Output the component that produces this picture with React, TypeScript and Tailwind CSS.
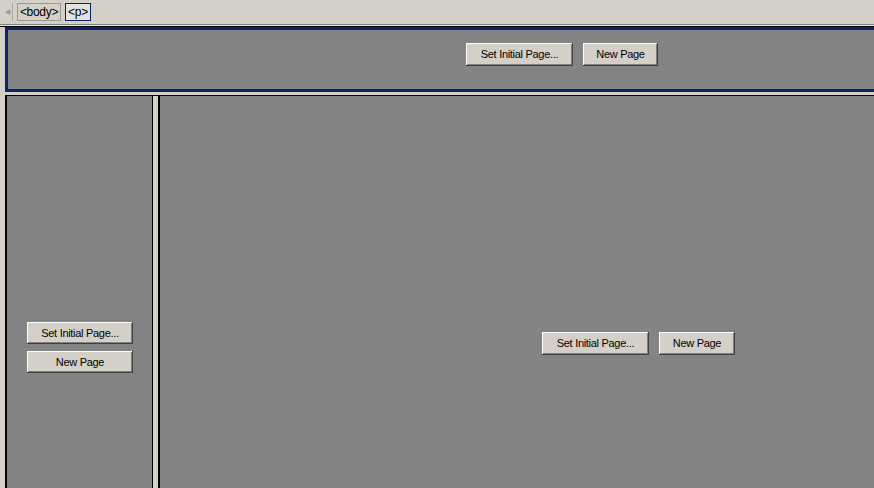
import React from 'react';

const font = { fontFamily: '"Liberation Sans", Arial, sans-serif' };

function WinButton({ label, w, h = 'h-[23px]' }: { label: string; w: string; h?: string }) {
  return (
    <button
      className={`${w} ${h} flex items-center justify-center bg-[#d4d0c8] text-[11px] leading-none tracking-[-0.3px] text-black shadow-[inset_-1px_-1px_0_#404040,inset_1px_1px_0_#ffffff,inset_-2px_-2px_0_#808080]`}
    >
      {label}
    </button>
  );
}

export default function App() {
  return (
    <div style={font} className="flex h-[488px] w-[874px] flex-col overflow-hidden bg-[#d4d0c8]">
      {/* tag selector bar */}
      <div className="flex h-[24px] items-center gap-[4px] pl-[2px] text-[12px] tracking-[-0.3px] text-black">
        <div className="flex h-[18px] w-[11px] items-center justify-center border-r border-[#a8a6a0] text-[7px] text-[#9a9890]">
          ◀
        </div>
        <div className="flex h-[18px] w-[44px] items-center justify-center border border-[#9a9890]">&lt;body&gt;</div>
        <div className="flex h-[18px] w-[26px] items-center justify-center border border-[#0a246a] bg-[#e4e2dc]">&lt;p&gt;</div>
      </div>
      <div className="h-px bg-[#808080]" />
      <div className="h-px bg-[#e8e6e0]" />
      <div className="h-px bg-[#000000]" />

      {/* top frame */}
      <div className="pl-[5px]">
        <div className="h-[65px] border-[3px] border-r-0 border-[#0a246a] bg-[#848484] pl-[458px] pt-[13px]">
          <div className="flex gap-[10px]">
            <WinButton label="Set Initial Page..." w="w-[107px]" />
            <WinButton label="New Page" w="w-[75px]" />
          </div>
        </div>
      </div>

      <div className="h-[3px]" />
      <div className="ml-[5px] h-px bg-black" />

      {/* bottom frameset */}
      <div className="ml-[5px] flex flex-1 border-l-2 border-black">
        <div className="flex w-[145px] flex-col items-center bg-[#848484] pt-[226px]">
          <div className="flex flex-col gap-[7px] pl-[1px]">
            <WinButton label="Set Initial Page..." w="w-[106px]" h="h-[22px]" />
            <WinButton label="New Page" w="w-[106px]" h="h-[22px]" />
          </div>
        </div>
        <div className="w-[1px] bg-black" />
        <div className="w-[5px] bg-[#d4d0c8]" />
        <div className="w-[2px] bg-black" />
        <div className="flex-1 bg-[#848484] pl-[382px] pt-[236px]">
          <div className="flex gap-[10px]">
            <WinButton label="Set Initial Page..." w="w-[107px]" />
            <WinButton label="New Page" w="w-[76px]" />
          </div>
        </div>
      </div>
    </div>
  );
}
